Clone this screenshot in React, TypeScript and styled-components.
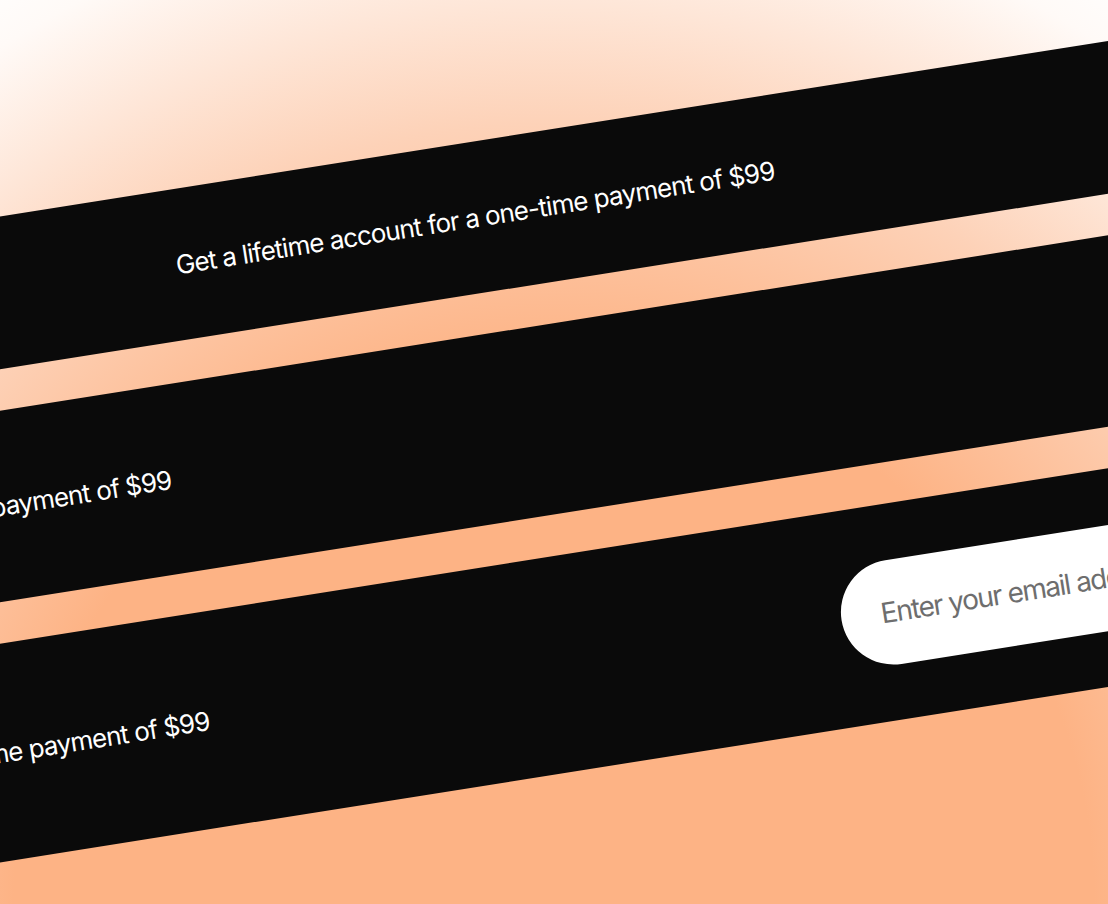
import styled, { createGlobalStyle } from 'styled-components';

// Page reset + peach glow behind the tilted bars
const GlobalStyle = createGlobalStyle`
  html, body, #root {
    margin: 0;
    padding: 0;
    height: 100%;
    overflow: hidden;
  }
  body {
    font-family: Inter, 'Noto Sans', sans-serif;
    background: #fdb385;
  }
`;

const Stage = styled.div`
  width: 100vw;
  height: 100vh;
  overflow: hidden;
  background: radial-gradient(
    circle at 50% 100%,
    #fdb385 0,
    #fdb385 540px,
    #fdd2b8 780px,
    #fffaf7 1020px,
    #ffffff 1100px
  );
`;

// Everything sits on one tilted sheet
const Tilted = styled.div`
  width: 2070px;
  display: flex;
  flex-direction: column;
  gap: 41px;
  transform-origin: 0 0;
  transform: translate(-559px, 305px) rotate(-9deg);
`;

type Align = 'center' | 'start' | 'split';

const Bar = styled.section<{ $height: number; $align: Align }>`
  height: ${(p) => p.$height}px;
  background: #0a0a0a;
  display: flex;
  align-items: center;
  justify-content: ${(p) =>
    p.$align === 'center' ? 'center' : p.$align === 'split' ? 'space-between' : 'flex-start'};
  padding: ${(p) => (p.$align === 'center' ? '0' : p.$align === 'split' ? '0 176px 0 88px' : '0 88px')};
  box-sizing: border-box;
`;

const Pitch = styled.p`
  margin: 0;
  color: #ffffff;
  font-size: 26px;
  font-weight: 400;
  letter-spacing: -0.9px;
  white-space: nowrap;
`;

const EmailForm = styled.form`
  display: flex;
  align-items: center;
`;

const EmailInput = styled.input`
  width: 560px;
  height: 105px;
  box-sizing: border-box;
  border: none;
  outline: none;
  border-radius: 999px;
  background: #ffffff;
  padding: 0 40px;
  font-family: Inter, 'Noto Sans', sans-serif;
  font-size: 28px;
  letter-spacing: -1.45px;
  color: #0a0a0a;

  &::placeholder {
    color: #6e6e6e;
  }
`;

const pitch = 'Get a lifetime account for a one-time payment of $99';

const App = () => {
  return (
    <>
      <GlobalStyle />
      <Stage>
        <Tilted>
          <Bar $height={151} $align="center">
            <Pitch>{pitch}</Pitch>
          </Bar>
          <Bar $height={189} $align="start">
            <Pitch>{pitch}</Pitch>
          </Bar>
          <Bar $height={216} $align="split">
            <Pitch>{pitch}</Pitch>
            <EmailForm onSubmit={(e) => e.preventDefault()}>
              <EmailInput type="email" placeholder="Enter your email address" />
            </EmailForm>
          </Bar>
        </Tilted>
      </Stage>
    </>
  );
};

export default App;
